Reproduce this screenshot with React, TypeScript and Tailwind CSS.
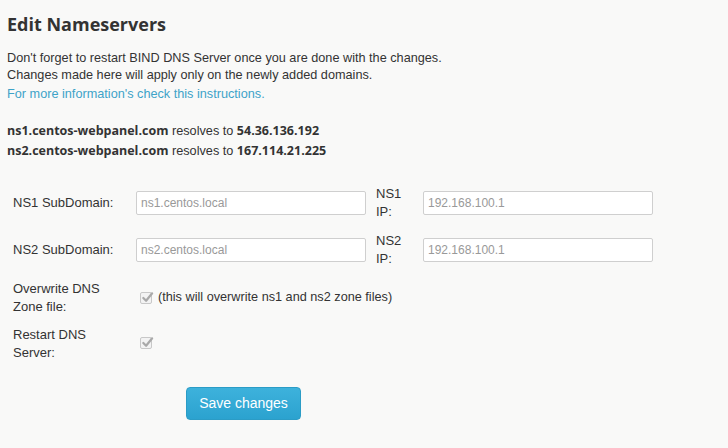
import React from "react";

const sans = { fontFamily: '"Liberation Sans", Arial, sans-serif' };
const open = { fontFamily: '"Open Sans", sans-serif' };

function Check() {
  return (
    <span className="relative inline-block w-[12px] h-[12px] border border-[#c8c8c8] bg-[#f3f3f3] rounded-[2px] shrink-0">
      <svg
        viewBox="0 0 14 14"
        className="absolute left-[0px] top-[-2px] w-[13px] h-[13px]"
      >
        <path
          d="M2.5 7.5 L5.5 10.5 L12 2.5"
          fill="none"
          stroke="#a9a9a9"
          strokeWidth="2.4"
          strokeLinecap="round"
          strokeLinejoin="round"
        />
      </svg>
    </span>
  );
}

function Field({ label, ipLabel, value, ip }: { label: string; ipLabel: string; value: string; ip: string }) {
  return (
    <div className="flex items-center h-[36px]">
      <div className="w-[123px] text-[13px] text-[#333]">{label}</div>
      <input
        readOnly
        placeholder={value}
        className="w-[230px] h-[24px] border border-[#cfcfcf] bg-white px-[4px] text-[12px] text-[#999] placeholder:text-[#999] rounded-[2px] outline-none"
        style={sans}
      />
      <div className="w-[47px] ml-[10px] text-[13px] leading-[18px] text-[#333]">
        <div>{ipLabel}</div>
        <div>IP:</div>
      </div>
      <input
        readOnly
        placeholder={ip}
        className="w-[230px] h-[24px] border border-[#cfcfcf] bg-white px-[4px] text-[12px] text-[#999] placeholder:text-[#999] rounded-[2px] outline-none"
        style={sans}
      />
    </div>
  );
}

export default function App() {
  return (
    <div className="w-[728px] h-[448px] bg-[#f9f9f8] pl-[7px] pt-[12px] text-[#333]" style={sans}>
      <h1 className="text-[18px] leading-[24px] font-bold text-[#333]" style={open}>
        Edit Nameservers
      </h1>

      <p className="mt-[14px] text-[12.7px] leading-[17px]">
        Don't forget to restart BIND DNS Server once you are done with the changes.
        <br />
        Changes made here will apply only on the newly added domains.
      </p>
      <a className="block mt-[2px] text-[12.7px] leading-[17px] text-[#3ea3c8]" href="#">
        For more information's check this instructions.
      </a>

      <div className="mt-[18px] text-[12.7px] leading-[20px]">
        <div>
          <b className="text-[12.5px]" style={open}>ns1.centos-webpanel.com</b> resolves to{" "}
          <b className="text-[12.5px]" style={open}>54.36.136.192</b>
        </div>
        <div>
          <b className="text-[12.5px]" style={open}>ns2.centos-webpanel.com</b> resolves to{" "}
          <b className="text-[12.5px]" style={open}>167.114.21.225</b>
        </div>
      </div>

      <form className="ml-[6px] mt-[24px]">
        <Field label="NS1 SubDomain:" ipLabel="NS1" value="ns1.centos.local" ip="192.168.100.1" />
        <div className="mt-[11px]">
          <Field label="NS2 SubDomain:" ipLabel="NS2" value="ns2.centos.local" ip="192.168.100.1" />
        </div>

        <div className="flex items-center mt-[12px] h-[36px]">
          <div className="w-[123px] text-[13px] leading-[18px]">
            Overwrite DNS
            <br />
            Zone file:
          </div>
          <div className="flex items-center gap-[6px] ml-[4px]">
            <Check />
            <span className="text-[12.7px]">(this will overwrite ns1 and ns2 zone files)</span>
          </div>
        </div>

        <div className="flex items-center mt-[10px] h-[36px]">
          <div className="w-[123px] text-[13px] leading-[18px]">
            Restart DNS
            <br />
            Server:
          </div>
          <div className="ml-[4px]">
            <Check />
          </div>
        </div>

        <button
          type="button"
          className="mt-[25px] ml-[173px] w-[115px] h-[33px] rounded-[4px] border border-[#2b9cc6] bg-gradient-to-b from-[#3db2dc] to-[#2ba2cf] text-white text-[14px]"
          style={sans}
        >
          Save changes
        </button>
      </form>
    </div>
  );
}
